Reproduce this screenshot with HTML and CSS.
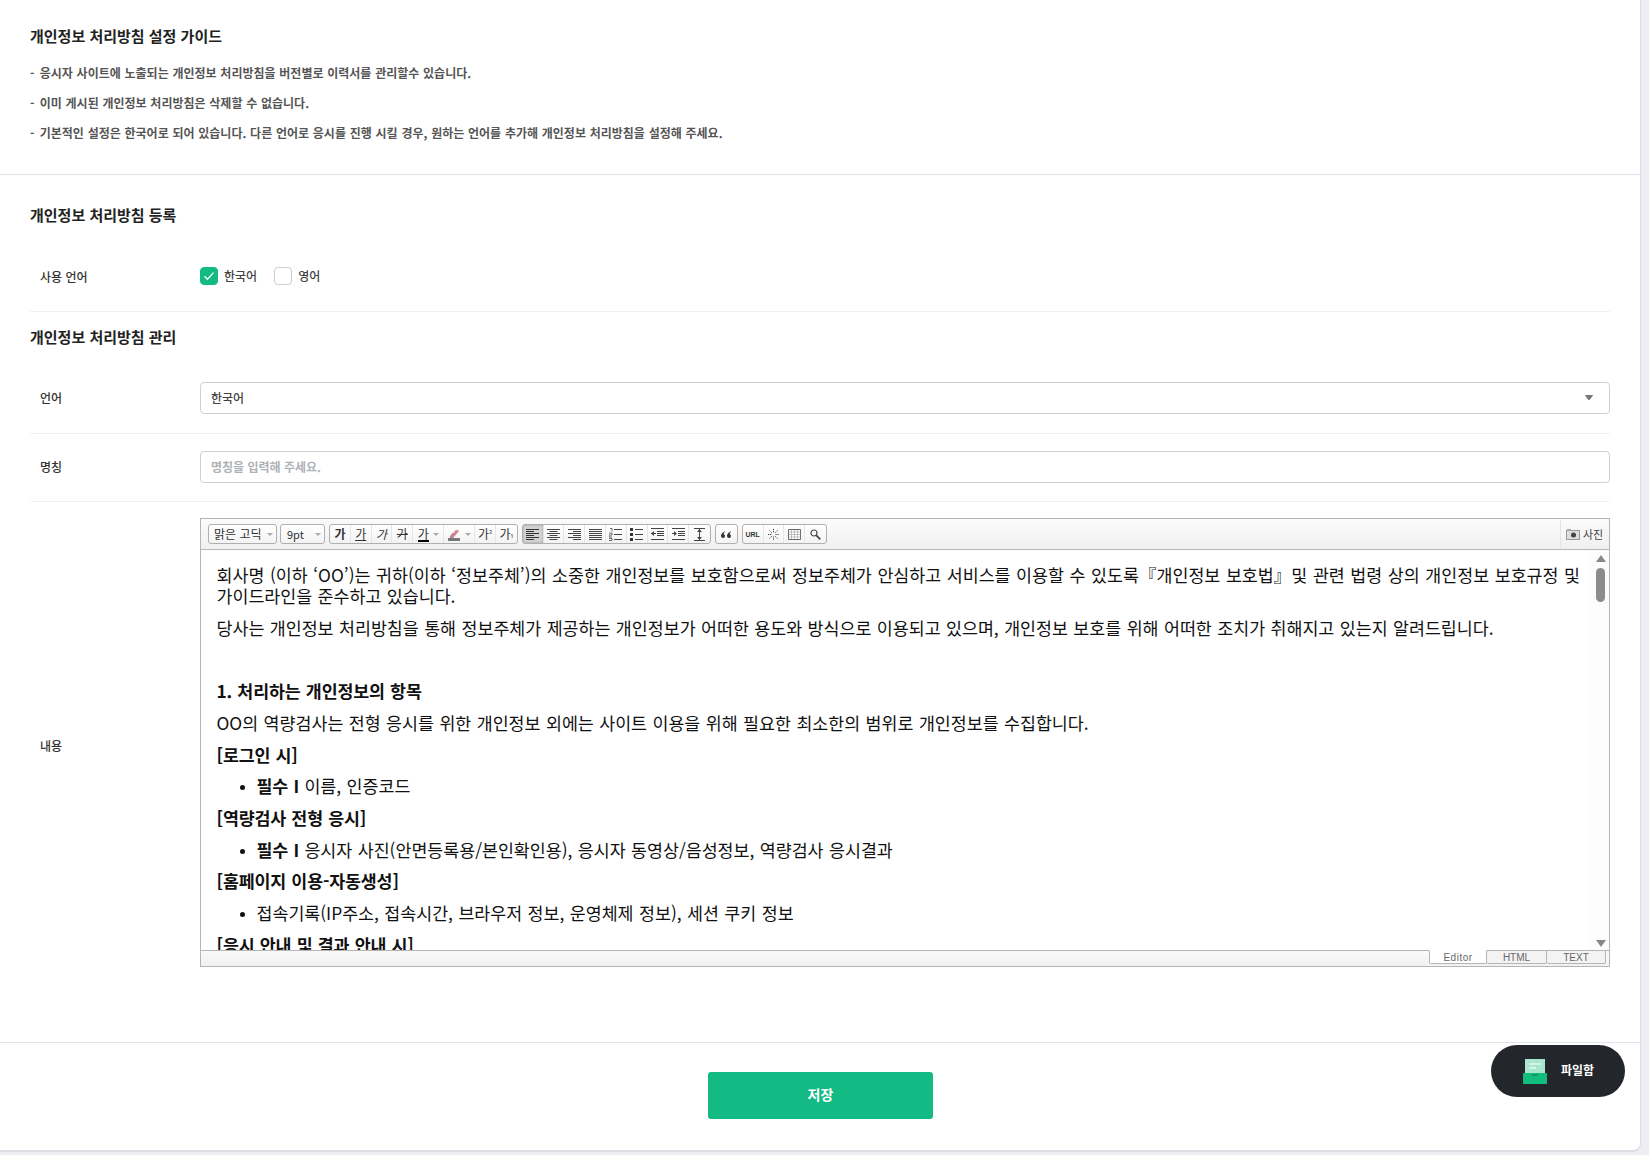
FILE: index.html
```html
<!DOCTYPE html>
<html lang="ko">
<head>
    <meta charset="UTF-8">
    <title>개인정보 처리방침 설정</title>
    <link rel="stylesheet" href="styles.css">
</head>
<body>
    <div class="panel">
        <!-- Guide -->
        <section class="guide">
            <h2 class="title">개인정보 처리방침 설정 가이드</h2>
            <p class="guide-line"><span class="dash">-</span> 응시자 사이트에 노출되는 개인정보 처리방침을 버전별로 이력서를 관리할수 있습니다.</p>
            <p class="guide-line"><span class="dash">-</span> 이미 게시된 개인정보 처리방침은 삭제할 수 없습니다.</p>
            <p class="guide-line"><span class="dash">-</span> 기본적인 설정은 한국어로 되어 있습니다. 다른 언어로 응시를 진행 시킬 경우, 원하는 언어를 추가해 개인정보 처리방침을 설정해 주세요.</p>
        </section>

        <!-- Form -->
        <section class="form">
            <h2 class="title">개인정보 처리방침 등록</h2>
            <div class="row row-lang">
                <div class="label">사용 언어</div>
                <div class="checks">
                    <span class="check on">
                        <svg width="12" height="10" viewBox="0 0 12 10"><path d="M1.5 5.2l3 3 6-6.6" fill="none" stroke="#fff" stroke-width="1.3"/></svg>
                    </span>
                    <span class="check-text">한국어</span>
                    <span class="check"></span>
                    <span class="check-text">영어</span>
                </div>
            </div>

            <h2 class="title title-manage">개인정보 처리방침 관리</h2>
            <div class="row row-select">
                <div class="label">언어</div>
                <div class="field">
                    <span>한국어</span>
                    <svg class="caret" width="8" height="5" viewBox="0 0 8 5"><path d="M0.5 0.5h7L4.500 4.500h-1z" fill="#777" stroke="#777" stroke-linejoin="round"/></svg>
                </div>
            </div>
            <div class="row row-name">
                <div class="label">명칭</div>
                <div class="field placeholder">명칭을 입력해 주세요.</div>
            </div>
            <div class="row row-content">
                <div class="label">내용</div>
                <div class="editor">
                    <div class="toolbar">
                        <div class="tool-select font-select">맑은 고딕<i class="arrow"></i></div>
                        <div class="tool-select size-select">9pt<i class="arrow"></i></div>
                        <div class="tool-group">
                            <span class="tool"><b>가</b></span>
                            <span class="tool"><u>가</u></span>
                            <span class="tool"><em>가</em></span>
                            <span class="tool"><s>가</s></span>
                            <span class="tool tool-wide"><span class="color-a">가</span><i class="arrow"></i></span>
                            <span class="tool tool-wide">
                                <svg width="14" height="14" viewBox="0 0 14 14"><path d="M3 9l6-7 3 2-6 7H3z" fill="#c8808c"/><path d="M5 3h5M7 1v5" stroke="#fff" stroke-width="1"/><rect x="1" y="11" width="12" height="3" fill="#777"/></svg>
                                <i class="arrow"></i>
                            </span>
                            <span class="tool">가<sup>²</sup></span>
                            <span class="tool">가<sub>₁</sub></span>
                        </div>
                        <div class="tool-group">
                            <span class="tool active"><svg width="13" height="11" viewBox="0 0 13 11"><path d="M0 .5h13M0 2.5h8M0 4.5h13M0 6.5h8M0 8.5h13M0 10.5h8" stroke="#333"/></svg></span>
                            <span class="tool"><svg width="13" height="11" viewBox="0 0 13 11"><path d="M0 .5h13M2.500 2.5h8M0 4.500h13M2.500 6.500h8M0 8.500h13M2.500 10.500h8" stroke="#444"/></svg></span>
                            <span class="tool"><svg width="13" height="11" viewBox="0 0 13 11"><path d="M0 .5h13M5 2.5h8M0 4.5h13M5 6.5h8M0 8.5h13M5 10.5h8" stroke="#444"/></svg></span>
                            <span class="tool"><svg width="13" height="11" viewBox="0 0 13 11"><path d="M0 .5h13M0 2.5h13M0 4.5h13M0 6.5h13M0 8.5h13M0 10.5h13" stroke="#444"/></svg></span>
                            <span class="tool"><svg width="13" height="13" viewBox="0 0 13 13"><path d="M5 1.500h8M5 6.500h8M5 11.500h8" stroke="#444"/><path d="M1 .5h2v3M0 5h3v2H0v2h3M0 10.500h3v2H0" fill="none" stroke="#444" stroke-width=".8"/></svg></span>
                            <span class="tool"><svg width="13" height="13" viewBox="0 0 13 13"><path d="M5 1.500h8M5 6.500h8M5 11.500h8" stroke="#444"/><path d="M0 0h3v3H0zM0 5h3v3H0zM0 10h3v3H0z" fill="#333"/></svg></span>
                            <span class="tool"><svg width="13" height="12" viewBox="0 0 13 12"><path d="M0 .5h13M6 3.500h7M6 5.500h7M6 7.500h7M0 11.500h13M0 5.500h5" stroke="#444"/><path d="M3 3l-3 2.500L3 8z" fill="#444"/></svg></span>
                            <span class="tool"><svg width="13" height="12" viewBox="0 0 13 12"><path d="M0 .5h13M6 3.500h7M6 5.500h7M6 7.500h7M0 11.500h13M0 5.500h3" stroke="#444"/><path d="M2 3l3 2.500L2 8z" fill="#444"/></svg></span>
                            <span class="tool"><svg width="11" height="13" viewBox="0 0 11 13"><path d="M0 .5h11M0 12.500h11M5.500 1v11" stroke="#444"/><path d="M3 4l2.500-3L8 4zM3 9l2.500 3L8 9z" fill="#444"/></svg></span>
                        </div>
                        <div class="tool-group">
                            <span class="tool"><svg width="10" height="7" viewBox="0 0 10 7"><path d="M4 0C1.500 1.500 0 3 0 5a2 2 0 0 0 4 0c0-1-.6-1.700-1.500-1.800zM10 0C7.500 1.500 6 3 6 5a2 2 0 0 0 4 0c0-1-.6-1.700-1.500-1.800z" fill="#333"/></svg></span>
                        </div>
                        <div class="tool-group">
                            <span class="tool tool-url">URL</span>
                            <span class="tool"><svg width="11" height="11" viewBox="0 0 11 11"><path d="M5.500 0v3.500M5.500 7.500V11M0 5.500h3.500M7.500 5.500H11M1.500 1.500l2.200 2.200M7.300 7.300l2.200 2.200M9.500 1.500L7.300 3.700M3.700 7.300L1.500 9.500" stroke="#444" stroke-dasharray="1.200 .8"/></svg></span>
                            <span class="tool"><svg width="13" height="11" viewBox="0 0 13 11"><path d="M.5.500h12v10H.5z" fill="#fff" stroke="#666"/><path d="M.5 3h12M.5 5.500h12M.5 8h12M3.500 1v9M6.500 1v9M9.500 1v9" stroke="#aaa" stroke-width=".7"/></svg></span>
                            <span class="tool"><svg width="11" height="11" viewBox="0 0 11 11"><circle cx="4" cy="4" r="3" fill="#fff" stroke="#444" stroke-width="1.200"/><path d="M6.300 6.300L10.300 10.300" stroke="#444" stroke-width="1.800"/></svg></span>
                        </div>
                        <div class="photo">
                            <svg width="14" height="11" viewBox="0 0 14 11"><rect x=".5" y="1.500" width="13" height="9" fill="#ddd" stroke="#999"/><circle cx="7.500" cy="6" r="2.500" fill="#444"/><rect x="1" y="0" width="4" height="2" fill="#aaa"/></svg>
                            <span>사진</span>
                        </div>
                    </div>
                    <div class="editor-body">
                        <p class="justify">회사명 (이하 ‘OO’)는 귀하(이하 ‘정보주체’)의 소중한 개인정보를 보호함으로써 정보주체가 안심하고 서비스를 이용할 수 있도록『개인정보 보호법』및 관련 법령 상의 개인정보 보호규정 및 가이드라인을 준수하고 있습니다.</p>
                        <p>당사는 개인정보 처리방침을 통해 정보주체가 제공하는 개인정보가 어떠한 용도와 방식으로 이용되고 있으며, 개인정보 보호를 위해 어떠한 조치가 취해지고 있는지 알려드립니다.</p>
                        <p>&nbsp;</p>
                        <p><b>1. 처리하는 개인정보의 항목</b></p>
                        <p>OO의 역량검사는 전형 응시를 위한 개인정보 외에는 사이트 이용을 위해 필요한 최소한의 범위로 개인정보를 수집합니다.</p>
                        <p><b>[로그인 시]</b></p>
                        <ul><li><b>필수 I</b> 이름, 인증코드</li></ul>
                        <p><b>[역량검사 전형 응시]</b></p>
                        <ul><li><b>필수 I</b> 응시자 사진(안면등록용/본인확인용), 응시자 동영상/음성정보, 역량검사 응시결과</li></ul>
                        <p><b>[홈페이지 이용-자동생성]</b></p>
                        <ul><li>접속기록(IP주소, 접속시간, 브라우저 정보, 운영체제 정보), 세션 쿠키 정보</li></ul>
                        <p><b>[응시 안내 및 결과 안내 시]</b></p>
                        <div class="scroll-track">
                            <i class="scroll-up"></i>
                            <i class="scroll-thumb"></i>
                            <i class="scroll-down"></i>
                        </div>
                    </div>
                    <div class="editor-foot">
                        <span class="tab tab-on">Editor</span>
                        <span class="tab tab-html">HTML</span>
                        <span class="tab tab-text">TEXT</span>
                    </div>
                </div>
            </div>
        </section>

        <div class="save-bar">
            <button class="save">저장</button>
        </div>

        <div class="file-box">
            <svg width="24" height="25" viewBox="0 0 24 25">
                <rect x="2" y="0" width="20" height="16" fill="#a9e5cf"/>
                <path d="M6 5h12M6 9h7" stroke="#fff" stroke-width="1"/>
                <rect x="0" y="14" width="24" height="11" rx="1" fill="#13bd7e"/>
                <rect x="9" y="15" width="6" height="2" fill="#0e9a66"/>
            </svg>
            <span class="file-text">파일함</span>
        </div>
    </div>
</body>
</html>
```

FILE: styles.css
```css
* {
    box-sizing: border-box;
}

body {
    margin: 0;
    height: 1155px;
    overflow: hidden;
    background-color: #eceef2;
    font-family: "Noto Sans CJK KR", "Noto Sans", sans-serif;
    color: #333;
}

.panel {
    position: relative;
    width: 1641px;
    height: 1152px;
    background-color: #fff;
    border-right: 1px solid #dcdee3;
    border-bottom: 2px solid #dcdee3;
    border-bottom-right-radius: 8px;
}

.title {
    margin: 0;
    font-size: 15px;
    line-height: 20px;
    font-weight: 700;
    color: #222;
}

.guide {
    height: 175px;
    padding: 26px 30px 0;
    border-bottom: 1px solid #e2e3e8;
}

.guide .title {
    margin-bottom: 12px;
}

.guide-line {
    margin: 0;
    font-size: 12px;
    line-height: 30px;
    font-weight: 600;
    color: #555;
    word-spacing: 0.4px;
}

.dash {
    font-weight: 700;
    margin-right: 1.5px;
}

.form {
    padding: 30px 30px 0;
    width: 1610px;
}

.row {
    display: flex;
    border-bottom: 1px solid #f1f1f3;
    width: 1580px;
}

.label {
    width: 170px;
    padding-left: 10px;
    flex-shrink: 0;
    font-size: 12px;
    font-weight: 500;
    color: #333;
}

.row-lang {
    margin-top: 18px;
    height: 69px;
    align-items: center;
}

.row-lang .label {
    margin-bottom: 2px;
}

.checks {
    display: flex;
    align-items: center;
    margin-top: -2px;
}

.check {
    width: 18px;
    height: 18px;
    display: flex;
    align-items: center;
    justify-content: center;
    border: 1px solid #ccced4;
    border-radius: 4px;
    background-color: #fff;
}

.check.on {
    background-color: #13ba84;
    border-color: #13ba84;
}

.check-text {
    margin: 0 17px 2px 6px;
    font-size: 12px;
    color: #444;
    font-weight: 500;
}

.title-manage {
    margin-top: 15px;
}

.row-select {
    margin-top: 35px;
    height: 52px;
    align-items: flex-start;
}

.row-name {
    height: 68px;
    padding-top: 17px;
    align-items: flex-start;
}

.row-select .label,
.row-name .label {
    line-height: 32px;
}

.field {
    flex: 1;
    height: 32px;
    display: flex;
    align-items: center;
    justify-content: space-between;
    padding: 0 16px 2px 10px;
    border: 1px solid #cdd0d6;
    border-radius: 4px;
    font-size: 12px;
    font-weight: 500;
    color: #444;
}

.placeholder {
    color: #aeb1b7;
    font-weight: 600;
}

.row-content {
    border-bottom: none;
    padding-top: 16px;
    align-items: center;
}

.row-content .label {
    padding-top: 6px;
}

.editor {
    flex: 1;
    height: 449px;
    border: 1px solid #b5b5b5;
    display: flex;
    flex-direction: column;
    font-size: 12px;
}

/* Toolbar */
.toolbar {
    height: 31px;
    flex-shrink: 0;
    display: flex;
    align-items: center;
    gap: 3px;
    padding-left: 7px;
    background: linear-gradient(#fbfbfb, #f0f0f0);
    border-bottom: 1px solid #b5b5b5;
}

.tool-select,
.tool-group {
    height: 20px;
    display: flex;
    align-items: center;
    background: linear-gradient(#ffffff, #f3f3f3);
    border: 1px solid #b0b0b0;
    border-radius: 3px;
    color: #333;
}

.tool-select {
    justify-content: space-between;
    padding: 0 3px 0 5px;
    font-size: 12px;
    line-height: 1;
}

.font-select {
    width: 69px;
}

.size-select {
    width: 45px;
    padding-left: 6px;
    font-size: 11px;
}

.tool-group {
    margin-left: 1px;
}

.tool {
    width: 20.800px;
    height: 18px;
    display: flex;
    align-items: center;
    justify-content: center;
    border-right: 1px solid #e6e6e6;
    font-size: 12px;
    color: #333;
    line-height: 1;
}

.tool:last-child {
    border-right: none;
}

.tool-wide {
    width: 31px;
    gap: 4px;
}

.tool b {
    font-weight: 700;
}

.tool s,
.tool u {
    text-decoration-thickness: 1px;
}

.tool sup,
.tool sub {
    font-size: 8px;
    line-height: 1;
}

.tool.active {
    background-color: #d2d2d2;
    box-shadow: inset 0 0 2px #888;
}

.color-a {
    border-bottom: 2px solid #000;
    line-height: 13px;
}

.tool-url {
    font-family: "Liberation Sans", sans-serif;
    font-size: 7px;
    font-weight: 700;
}

.arrow {
    width: 0;
    height: 0;
    border-left: 3px solid transparent;
    border-right: 3px solid transparent;
    border-top: 3px solid #aaa;
}

.photo {
    margin-left: auto;
    width: 49px;
    height: 29px;
    display: flex;
    align-items: center;
    gap: 3px;
    padding-left: 5px;
    border-left: 1px solid #e4e4e4;
    font-size: 11px;
    color: #444;
}

/* Editor content */
.editor-body {
    position: relative;
    flex: 1;
    overflow: hidden;
    padding: 14.300px 29px 0 15.500px;
    font-size: 17.330px;
    line-height: 21px;
    word-spacing: 0.6px;
    color: #111;
}

.editor-body p {
    margin: 0 0 10.700px;
}

.editor-body b {
    letter-spacing: -0.150px;
}

.editor-body .justify {
    text-align: justify;
}

.editor-body ul {
    margin: 0 0 10.700px;
    padding-left: 40px;
}

.editor-body li::marker {
    font-size: 13px;
}

.scroll-track {
    position: absolute;
    top: 0;
    right: 0;
    width: 21px;
    height: 100%;
    background-color: #fcfcfc;
}

.scroll-track i {
    position: absolute;
    left: 8px;
}

.scroll-up {
    top: 5px;
    border-left: 5px solid transparent;
    border-right: 5px solid transparent;
    border-bottom: 7px solid #888;
}

.scroll-down {
    bottom: 3px;
    border-left: 5px solid transparent;
    border-right: 5px solid transparent;
    border-top: 7px solid #888;
}

.scroll-thumb {
    top: 18px;
    width: 9px;
    height: 34px;
    border-radius: 5px;
    background-color: #8c8c8c;
}

/* Editor tabs */
.editor-foot {
    height: 16px;
    flex-shrink: 0;
    display: flex;
    justify-content: flex-end;
    padding-right: 3px;
    background: linear-gradient(#f9f9f9, #f1f1f1);
    border-top: 1px solid #b5b5b5;
}

.tab {
    height: 14px;
    margin-top: -1px;
    display: flex;
    align-items: center;
    justify-content: center;
    font-family: "Liberation Sans", sans-serif;
    font-size: 10px;
    color: #666;
    border: 1px solid #b5b5b5;
    border-left: none;
    border-radius: 0 0 2px 2px;
    background-color: #f3f3f3;
}

.tab-on {
    width: 58px;
    border-left: 1px solid #b5b5b5;
    border-top-color: #fff;
    background-color: #fff;
    letter-spacing: 0.5px;
}

.tab-html {
    width: 60px;
}

.tab-text {
    width: 59px;
}

/* Bottom bar */
.save-bar {
    position: absolute;
    left: 0;
    right: 0;
    top: 1042px;
    bottom: 0;
    padding-top: 29px;
    display: flex;
    justify-content: center;
    align-items: flex-start;
    border-top: 1px solid #e2e3e8;
}

.save {
    width: 225px;
    height: 47px;
    margin-left: 1px;
    padding-bottom: 4px;
    border: none;
    border-radius: 3px;
    background-color: #13ba84;
    color: #fff;
    font-family: inherit;
    font-size: 14px;
    font-weight: 700;
}

.file-box {
    position: absolute;
    left: 1491px;
    top: 1045px;
    width: 134px;
    height: 52px;
    display: flex;
    align-items: center;
    gap: 14px;
    padding-left: 32px;
    border-radius: 26px;
    background-color: #23262b;
    color: #fff;
    font-size: 12px;
    font-weight: 700;
}

.file-text {
    margin-bottom: 3px;
}
```
